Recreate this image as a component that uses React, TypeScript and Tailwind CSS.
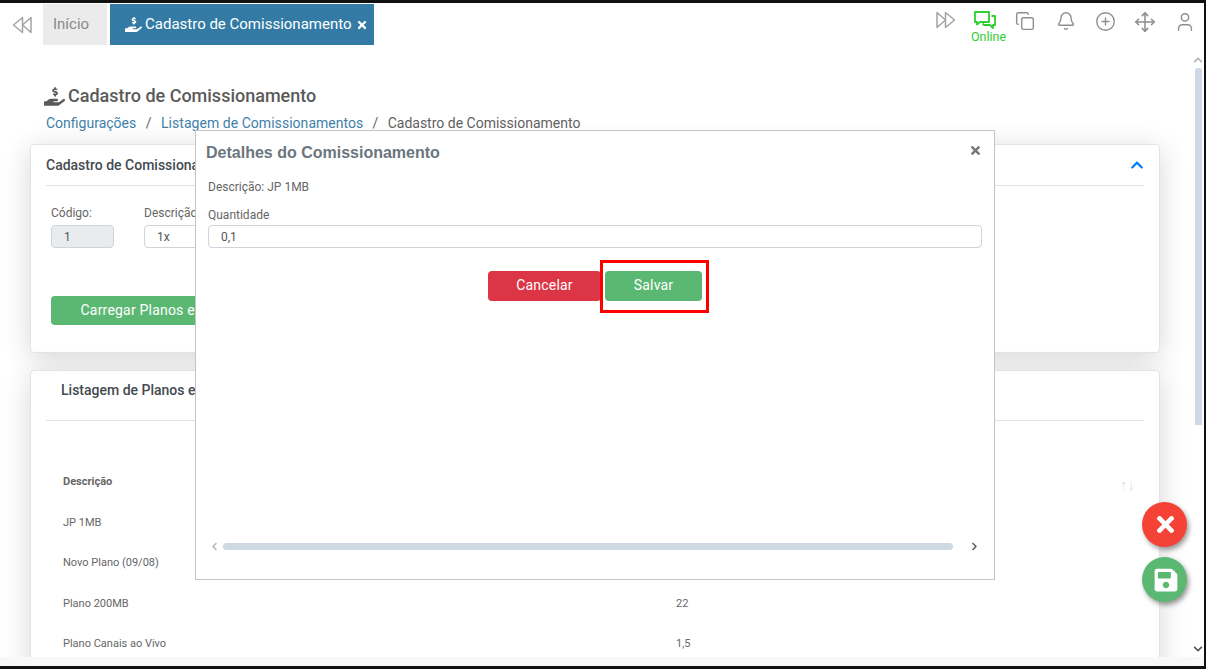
import React from 'react';
import { Bell, CirclePlus, Copy, Move, User } from 'lucide-react';
import { FaChevronDown, FaChevronLeft, FaChevronRight, FaChevronUp, FaHandHoldingUsd, FaSave, FaTimes } from 'react-icons/fa';

const rows = [
  { name: 'JP 1MB', value: '0,1' },
  { name: 'Novo Plano (09/08)', value: '10' },
  { name: 'Plano 200MB', value: '22' },
  { name: 'Plano Canais ao Vivo', value: '1,5' },
];

function DoubleArrow({ flip = false }: { flip?: boolean }) {
  return (
    <svg width="20" height="20" viewBox="0 0 20 20" fill="none" stroke="#a3a3a3" strokeWidth="1.5" strokeLinejoin="round" className={flip ? 'rotate-180' : ''}>
      <path d="M10.5 2.5 1.5 10l9 7.5z" />
      <path d="M19 2.5 10.5 10l8.5 7.5z" />
    </svg>
  );
}

function ChatIcon() {
  return (
    <svg width="24" height="20" viewBox="0 0 24 20" fill="none" stroke="#2fcf2f" strokeWidth="1.8" strokeLinejoin="round">
      <path d="M2 2h14v10H7l-3 2.5V12H2z" />
      <path d="M18.5 6H22v9h-2v3l-3-3h-6l-1.5-1.5" />
    </svg>
  );
}

function Header() {
  const iconClass = 'text-[#8f8f8f]';
  return (
    <header className="h-[42px] shrink-0 flex items-stretch pt-[1px]">
      <div className="w-[43px] flex items-center justify-center">
        <DoubleArrow />
      </div>
      <div className="w-[64px] bg-[#ebebeb] text-[#8a8a8a] text-[15px] flex items-center pl-[10px]">Início</div>
      <div className="ml-[3px] w-[264px] bg-[#337ba5] text-white text-[15px] flex items-center pl-[15px] gap-[3px]">
        <FaHandHoldingUsd className="w-[17px] h-[17px]" />
        <span>Cadastro de Comissionamento</span>
        <FaTimes className="w-[12px] h-[12px] ml-[1px] mt-[1px]" />
      </div>
      <div className="flex-1 relative flex justify-end items-start pt-[7px] pr-[11px]">
        <div className="flex items-start">
          <div className="w-[20px] mr-[17px] mt-[-1px]">
            <DoubleArrow flip />
          </div>
          <div className="w-[24px] mr-[18px] relative mt-[-1px]">
            <ChatIcon />
            <span className="absolute top-[18px] left-[-2px] text-[12.5px] text-[#2fcf2f]">Online</span>
          </div>
          <Copy className={`${iconClass} w-[20px] h-[20px] mr-[21px]`} strokeWidth={1.7} />
          <Bell className={`${iconClass} w-[20px] h-[20px] mr-[19px]`} strokeWidth={1.7} />
          <CirclePlus className={`${iconClass} w-[21px] h-[21px] mr-[18px]`} strokeWidth={1.6} />
          <Move className={`${iconClass} w-[22px] h-[22px] mr-[18px]`} strokeWidth={1.7} />
          <User className={`${iconClass} w-[22px] h-[22px] mr-[-1px]`} strokeWidth={1.6} />
        </div>
      </div>
    </header>
  );
}

function PageBody() {
  const cardClass = 'bg-white border border-[#e4e4e4] rounded-[4px] shadow-[0_5px_28px_rgba(0,0,0,0.16)]';
  return (
    <div className="w-[1130px] ml-[30px]">
      <div className="pl-[14px] pt-[40px] h-[99px]">
        <h1 className="flex items-center gap-[3px] text-[18px] leading-[22px] font-medium text-[#5a5a5a]">
          <FaHandHoldingUsd className="w-[21px] h-[21px]" />
          Cadastro de Comissionamento
        </h1>
        <nav className="flex text-[14px] leading-[20px] mt-[6px] ml-[2px] text-[#3f7fa8]">
          <span>Configurações</span>
          <span className="mx-[9.5px] text-[#666666]">/</span>
          <span className="tracking-[0.04px]">Listagem de Comissionamentos</span>
          <span className="mx-[9px] text-[#666666]">/</span>
          <span className="ml-[0.5px] text-[#5f5f5f]">Cadastro de Comissionamento</span>
        </nav>
      </div>

      <section className={`${cardClass} h-[209px] px-[15px]`}>
        <div className="h-[41px] border-b border-[#e2e2e2] flex items-center justify-between">
          <span className="text-[14px] font-medium text-[#444a50]">Cadastro de Comissionamento</span>
          <FaChevronUp className="w-[14px] h-[14px] text-[#007bff]" />
        </div>
        <div className="flex gap-[30px] px-[5px] mt-[20px]">
          <label className="w-[63px] text-[12px] leading-[14px] text-[#666666]">
            Código:
            <span className="mt-[5px] h-[23px] block bg-[#e9ecef] border border-[#ced4da] rounded-[4px] pl-[12px] pt-[1px] leading-[21px] text-[#555555]">1</span>
          </label>
          <label className="w-[300px] text-[12px] leading-[14px] text-[#666666]">
            Descrição:
            <span className="mt-[5px] h-[23px] block border border-[#ced4da] rounded-[4px] pl-[12px] pt-[1px] leading-[21px] text-[#555555]">1x</span>
          </label>
        </div>
        <button className="block ml-[5px] mt-[48px] h-[29px] w-[232px] bg-[#5bb872] rounded-[4px] text-white text-[14px] tracking-[0.2px]">
          Carregar Planos e Serviços
        </button>
      </section>

      <section className={`${cardClass} mt-[17px] px-[15px] h-[400px]`}>
        <div className="h-[50px] border-b border-[#e2e2e2] pl-[15px] pt-[9px] text-[14px] font-medium text-[#444a50]">
          Listagem de Planos e Serviços
        </div>
        <div className="pl-[17px] pr-[9px] mt-[41px] text-[11px] text-[#666666]">
          <div className="h-[40.5px] flex items-center font-bold">
            <span className="w-[613px]">Descrição</span>
            <span className="flex-1">Quantidade</span>
            <span className="text-[#e2e2e2] font-normal text-[15px] mt-[6px]">↑↓</span>
          </div>
          {rows.map((row) => (
            <div key={row.name} className="h-[40.5px] flex items-center">
              <span className="w-[613px]">{row.name}</span>
              <span>{row.value}</span>
            </div>
          ))}
        </div>
      </section>
    </div>
  );
}

function Modal() {
  return (
    <div className="absolute left-[195px] top-[130px] w-[800px] h-[450px] bg-white border border-[#c4c4c4] z-10 flex flex-col">
      <div className="flex items-center justify-between pl-[10px] pr-[12px] pt-[1px] h-[42px]">
        <h2 className="text-[16px] font-bold text-[#6c757d] font-['Liberation_Sans',sans-serif]">Detalhes do Comissionamento</h2>
        <FaTimes className="w-[13px] h-[13px] text-[#777777] mb-[4px]" />
      </div>
      <div className="px-[12px] text-[12px] text-[#666666]">
        <p className="leading-[14px] mt-[7px]">Descrição: JP 1MB</p>
        <p className="leading-[14px] mt-[14px]">Quantidade</p>
        <div className="mt-[3px] h-[23px] border border-[#ced4da] rounded-[4px] pl-[12px] pt-[1px] leading-[21px] text-[#555555]">0,1</div>
        <div className="flex justify-center mt-[23px]">
          <button className="w-[113px] h-[30px] pb-[1px] bg-[#dc3545] rounded-[4px] text-white text-[14px] tracking-[0.2px]">Cancelar</button>
          <div className="relative ml-[4px]">
            <button className="block w-[97px] h-[30px] pb-[1px] bg-[#5bb872] rounded-[4px] text-white text-[14px] tracking-[0.2px]">Salvar</button>
            <span className="absolute left-[-5px] top-[-11px] w-[109px] h-[53px] border-[3px] border-[#ff0000]" />
          </div>
        </div>
      </div>
      <div className="mt-auto mb-[29px] h-[8px] flex items-center pl-[14px] pr-[15px]">
        <FaChevronLeft className="w-[9px] h-[9px] text-[#b5b5b5]" />
        <div className="ml-[4px] w-[731px] h-[7px] rounded-full bg-[#cfd9e3]" />
        <FaChevronRight className="ml-[17px] w-[9px] h-[9px] text-[#555555]" />
      </div>
    </div>
  );
}

export default function App() {
  return (
    <div className="relative w-[1206px] h-[669px] overflow-hidden bg-white flex flex-col font-['Roboto',sans-serif]">
      <div className="h-[3px] shrink-0 bg-[#111111]" />
      <Header />
      <div className="flex-1 min-h-0 flex">
        <main className="flex-1 min-w-0 overflow-hidden">
          <PageBody />
        </main>
        <aside className="w-[12px] mr-[2px] flex flex-col items-center pt-[10px] pb-[3px]">
          <FaChevronUp className="w-[10px] h-[10px] text-[#b5b5b5]" />
          <div className="w-[7px] h-[357px] mt-[3px] rounded-t-[3px] bg-[#cfd9e3]" />
          <FaChevronDown className="mt-auto w-[10px] h-[10px] text-[#555555]" />
        </aside>
      </div>
      <div className="h-[9px] shrink-0 bg-[#f8f8f8] mr-[2px]" />
      <div className="h-[3px] shrink-0 bg-[#111111]" />
      <div className="absolute right-0 top-0 w-[2px] h-full bg-[#111111]" />

      <Modal />

      <button className="absolute left-[1142px] top-[502px] w-[45px] h-[45px] rounded-full bg-[#f44336] text-white flex items-center justify-center shadow-[2px_3px_5px_rgba(0,0,0,0.4)] z-20">
        <FaTimes className="w-[25px] h-[25px] ml-[2px]" />
      </button>
      <button className="absolute left-[1142px] top-[557px] w-[45px] h-[45px] rounded-full bg-[#5bb872] text-white flex items-center justify-center shadow-[2px_3px_5px_rgba(0,0,0,0.4)] z-20">
        <FaSave className="w-[26px] h-[26px] ml-[2px]" />
      </button>
    </div>
  );
}
